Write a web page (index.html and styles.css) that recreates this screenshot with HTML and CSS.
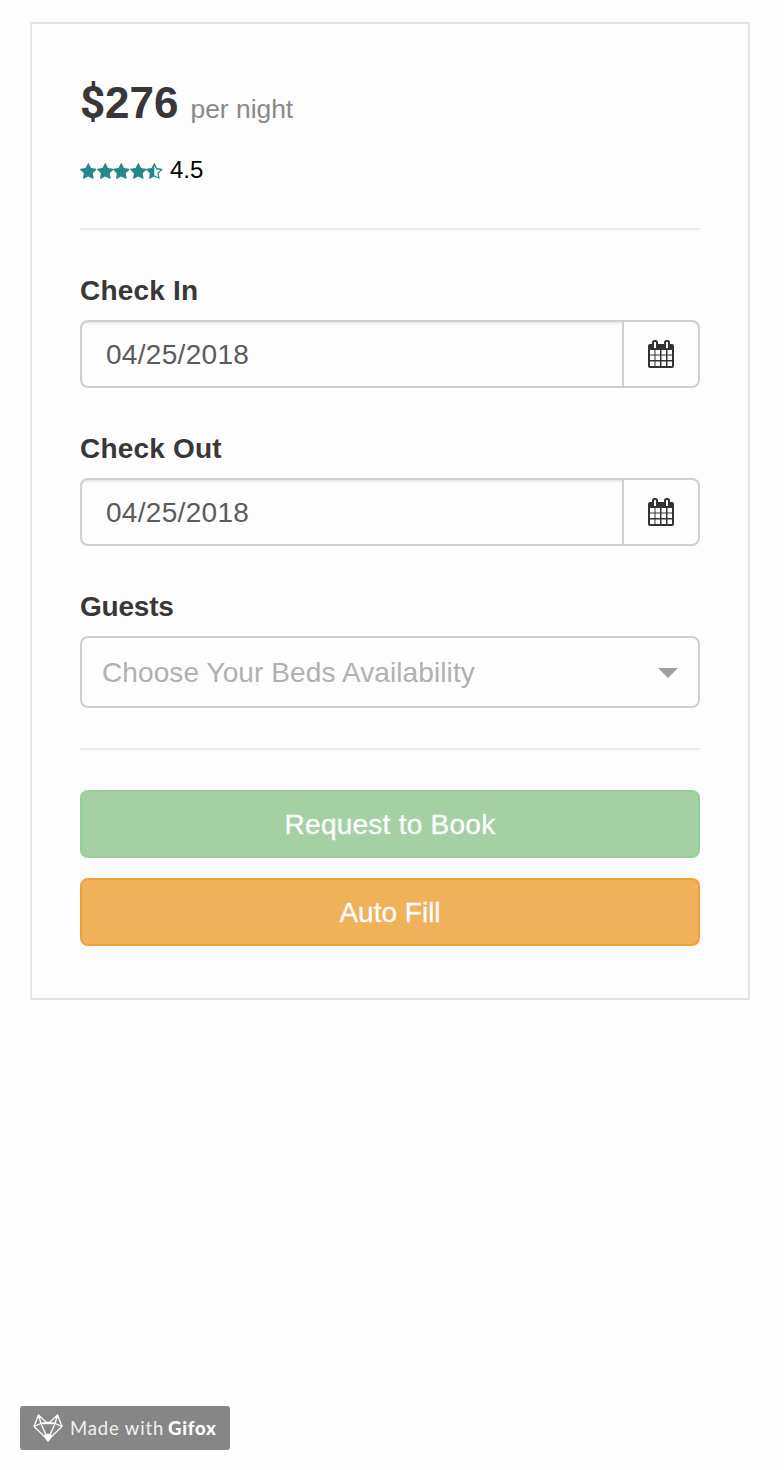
FILE: index.html
```html
<!DOCTYPE html>
<html lang="en">
<head>
<meta charset="utf-8">
<title>Booking</title>
<link rel="stylesheet" href="styles.css">
</head>
<body>
<svg class="defs" width="0" height="0" aria-hidden="true">
  <symbol id="star" viewBox="0 0 1664 1600"><path d="M1664 615q0 22-26 48l-363 354 86 500q1 7 1 20 0 50-41 50-19 0-40-12l-449-236-449 236q-22 12-40 12-21 0-31.500-14.500t-10.500-35.500q0-6 2-20l86-500-364-354q-25-27-25-48 0-37 56-46l502-73 225-455q19-41 49-41t49 41l225 455 502 73q56 9 56 46z"/></symbol>
  <symbol id="half-star" viewBox="0 0 1664 1600"><path fill-rule="evenodd" d="M1186 957l257-250-356-52-66-10-30-60-159-322v963l59 31 318 168-60-355-12-66zM1638 663l-363 354 86 500q5 33-6 51.500t-34 18.500q-17 0-40-12l-449-236-449 236q-23 12-40 12-23 0-34-18.500t-6-51.500l86-500-364-354q-32-32-23-59.500t54-34.500l502-73 225-455q20-41 49-41 28 0 49 41l225 455 502 73q45 7 54 34.500t-24 59.500z"/></symbol>
  <symbol id="calendar" viewBox="0 0 26 28">
    <rect x="0" y="4" width="26" height="24" rx="2"/>
    <path class="cells" d="M2 10h4.500v4.500H2zM7.500 10H12v4.500H7.500zM13.500 10H18v4.500h-4.500zM19.500 10H24v4.500h-4.500zM2 15.500h4.500V20H2zM7.500 15.500H12V20H7.500zM13.500 15.500H18V20h-4.500zM19.500 15.500H24V20h-4.500zM2 21.500h4.500V26H2zM7.500 21.500H12V26H7.500zM13.500 21.500H18V26h-4.500zM19.500 21.500H24V26h-4.500z"/>
    <rect x="4" y="0" width="6" height="9" rx="2.500"/><rect x="16" y="0" width="6" height="9" rx="2.500"/>
    <rect class="cells" x="6" y="2" width="2" height="6" rx=".6"/><rect class="cells" x="18" y="2" width="2" height="6" rx=".6"/>
  </symbol>
</svg>
<main class="card">
  <div class="price"><span class="amount"><span class="dollar">$</span>276</span><span class="unit">per night</span></div>
  <div class="rating">
    <span class="stars"><svg><use href="#star"/></svg><svg><use href="#star"/></svg><svg><use href="#star"/></svg><svg><use href="#star"/></svg><svg><use href="#half-star"/></svg></span>
    <span>4.5</span>
  </div>
  <hr class="rule">
  <section class="field">
    <div class="label">Check In</div>
    <div class="date"><span class="value">04/25/2018</span><span class="addon"><svg class="cal"><use href="#calendar"/></svg></span></div>
  </section>
  <section class="field">
    <div class="label">Check Out</div>
    <div class="date"><span class="value">04/25/2018</span><span class="addon"><svg class="cal"><use href="#calendar"/></svg></span></div>
  </section>
  <section class="field">
    <div class="label label-guests">Guests</div>
    <div class="select"><span>Choose Your Beds Availability</span><i class="caret"></i></div>
  </section>
  <hr class="rule rule-bottom">
  <button class="btn book">Request to Book</button>
  <button class="btn fill">Auto Fill</button>
</main>
<footer class="badge">
  <svg class="fox" viewBox="0 0 30 28"><path d="M1 12.500 5.500 1l8 7.500h3L24.500 1 29 12.500 19 22M1 12.500 11 22M5.500 1 8 9.500l-7 3M24.500 1 22 9.500l7 3M8 9.500h14M13.500 8.500 8 9.500 13 21M16.500 8.500l5.500 1L17 21"/><path class="nose" d="m11 22 4-2 4 2-4 5z"/></svg>
  <span class="made">Made with</span><span class="brand">Gifox</span>
</footer>
</body>
</html>
```
FILE: styles.css
```css
* { box-sizing: border-box; }
body {
  margin: 0;
  height: 1470px;
  padding: 22px 34px 20px 30px;
  display: flex;
  flex-direction: column;
  background: #fdfdfd;
  color: #383838;
  font: 28px/40px "Liberation Sans", Arial, sans-serif;
}
.defs { position: absolute; }
.card {
  height: 978px;
  border: 2px solid #e4e4e4;
  padding: 47px 48px 48px;
}
.price { height: 64px; display: flex; align-items: baseline; line-height: 64px; }
.amount { font-size: 44px; font-weight: 700; width: 110.500px; }
.dollar { font-family: Roboto, sans-serif; display: inline-block; width: 25px; line-height: 1; }
.unit { font-size: 26.400px; color: #898989; }
.rating {
  height: 30px;
  margin-top: 20px;
  display: flex;
  gap: 7px;
  line-height: 30px;
  font-size: 24px;
  color: #000;
}
.stars { display: flex; padding-top: 8px; }
.stars svg { width: 16.600px; height: 16px; fill: #23888d; }
.rule { width: 100%; height: 2px; border: 0; margin: 43px 0 0; background: #ececec; }
.field { margin-top: 40px; }
.label { height: 50px; line-height: 41px; font-weight: 700; letter-spacing: .2px; }
.label-guests { letter-spacing: -.2px; }
.date {
  display: flex;
  height: 68px;
  border: 2px solid #cfcfcf;
  border-radius: 8px;
  overflow: hidden;
}
.value {
  flex: 1;
  padding-left: 24px;
  line-height: 65px;
  color: #5b5b5b;
  letter-spacing: .3px;
  box-shadow: inset 0 2px 2px rgba(0, 0, 0, .075);
}
.addon {
  width: 76px;
  border-left: 2px solid #cfcfcf;
  display: flex;
  align-items: center;
  justify-content: center;
}
.cal { width: 26px; height: 28px; fill: #333; }
.cells { fill: #fdfdfd; }
.select {
  height: 72px;
  border: 2px solid #cfcfcf;
  border-radius: 8px;
  display: flex;
  align-items: center;
  justify-content: space-between;
  padding: 2px 20px 0;
  color: #b0b0b0;
  letter-spacing: .1px;
}
.caret { border: 10px solid transparent; border-top-color: #a0a0a0; border-bottom: 0; }
.rule-bottom { margin-top: 40px; }
.btn {
  display: block;
  width: 100%;
  height: 68px;
  margin-top: 40px;
  padding: 2px 0 0;
  border: 2px solid #94cf96;
  border-radius: 8px;
  background: #a4d0a4;
  color: #fff;
  font: inherit;
  letter-spacing: .25px;
  -webkit-text-stroke: .3px #fff;
}
.btn + .btn { margin-top: 20px; letter-spacing: 0; }
.fill { border-color: #eea236; background: #f1b15b; }
.badge {
  width: 210px;
  height: 44px;
  margin: auto 0 0 -10px;
  padding-left: 13px;
  border-radius: 3px;
  background: #868686;
  color: #f0f0f0;
  display: flex;
  align-items: center;
  font: 18.500px/42px Lato, sans-serif;
}
.fox { width: 30px; height: 28px; margin-right: 7px; fill: none; stroke: #fff; stroke-width: 1.3; stroke-linejoin: round; }
.nose { fill: #fff; }
.made { width: 98px; letter-spacing: .85px; }
.brand { font-weight: 900; color: #fff; letter-spacing: .8px; }
```
